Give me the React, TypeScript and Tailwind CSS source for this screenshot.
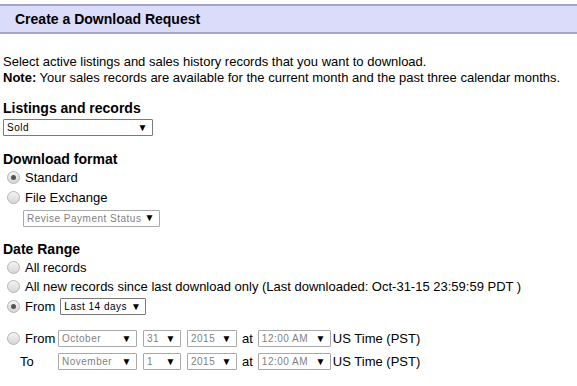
import React from 'react'

const FONT = { fontFamily: '"Liberation Sans", Arial, sans-serif' }

function Radio({ checked = false }: { checked?: boolean }) {
  return (
    <span className="relative inline-block w-[13px] h-[13px] rounded-full border border-[#b4b4b4] bg-gradient-to-b from-[#f4f4f4] to-[#d6d6d6] shrink-0">
      {checked && (
        <span className="absolute left-[3px] top-[3px] w-[5px] h-[5px] rounded-full bg-[#555555]" />
      )}
    </span>
  )
}

function Select({
  value,
  width,
  active = false,
}: {
  value: string
  width: string
  active?: boolean
}) {
  return (
    <span
      className={`inline-flex items-center justify-between h-[17px] border rounded-[1px] bg-white pl-[3px] pr-[4px] text-[10px] tracking-[0.5px] ${width} ${
        active ? 'border-[#7a7a7a] text-black' : 'border-[#a9a9a9] text-[#7f7f7f]'
      }`}
    >
      <span>{value}</span>
      <span className="text-[10px] text-black leading-none">▼</span>
    </span>
  )
}

function RadioRow({ checked, children, h = 'h-[20px]' }: { checked?: boolean; children: React.ReactNode; h?: string }) {
  return (
    <div className={`flex items-center ${h} pl-[7px] gap-[5px]`}>
      <Radio checked={checked} />
      {children}
    </div>
  )
}

export default function App() {
  return (
    <div className="w-[577px] h-[386px] bg-white text-[13px] text-black overflow-hidden" style={FONT}>
      <div className="mt-[4px] h-[30px] border-y-2 border-[#a4a4cc] bg-[#dadcfa] flex items-center pl-[15px]">
        <span className="font-bold text-[14px]">Create a Download Request</span>
      </div>

      <div className="mt-[20px] pl-[3px] leading-[16px]">
        <p>Select active listings and sales history records that you want to download.</p>
        <p>
          <b>Note:</b> Your sales records are available for the current month and the past three calendar months.
        </p>
      </div>

      <div className="mt-[14px] pl-[3px]">
        <h3 className="font-bold text-[14px] leading-[17px]">Listings and records</h3>
        <Select value="Sold" width="w-[150px]" active />
      </div>

      <div className="mt-[13px]">
        <h3 className="pl-[3px] font-bold text-[14px] leading-[18px]">Download format</h3>
        <RadioRow checked>Standard</RadioRow>
        <RadioRow>File Exchange</RadioRow>
        <div className="pl-[23px]">
          <Select value="Revise Payment Status" width="w-[137px]" />
        </div>
      </div>

      <div className="mt-[13px]">
        <h3 className="pl-[3px] font-bold text-[14px] leading-[18px]">Date Range</h3>
        <RadioRow h="h-[19px]">All records</RadioRow>
        <RadioRow h="h-[19px]">All new records since last download only (Last downloaded: Oct-31-15 23:59:59 PDT )</RadioRow>
        <RadioRow checked h="h-[21px]">
          <span>From</span>
          <Select value="Last 14 days" width="w-[86px]" active />
        </RadioRow>

        <div className="mt-[13px] flex flex-col gap-[6px]">
          <div className="flex items-center h-[17px]">
            <div className="w-[58px] flex items-center gap-[5px] pl-[7px]">
              <Radio />
              <span>From</span>
            </div>
            <Select value="October" width="w-[79px]" />
            <span className="ml-[6px]" />
            <Select value="31" width="w-[38px]" />
            <span className="ml-[6px]" />
            <Select value="2015" width="w-[50px]" />
            <span className="mx-[5px]">at</span>
            <Select value="12:00 AM" width="w-[73px]" />
            <span className="ml-[2px]">US Time (PST)</span>
          </div>
          <div className="flex items-center h-[17px]">
            <div className="w-[58px] pl-[20px]">To</div>
            <Select value="November" width="w-[79px]" />
            <span className="ml-[6px]" />
            <Select value="1" width="w-[38px]" />
            <span className="ml-[6px]" />
            <Select value="2015" width="w-[50px]" />
            <span className="mx-[5px]">at</span>
            <Select value="12:00 AM" width="w-[73px]" />
            <span className="ml-[2px]">US Time (PST)</span>
          </div>
        </div>
      </div>
    </div>
  )
}
